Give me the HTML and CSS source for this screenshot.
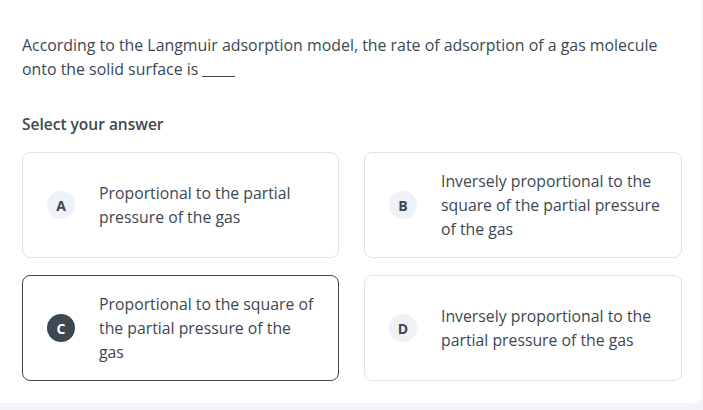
FILE: index.html
```html
<!DOCTYPE html>
<html>
<head>
<meta charset="utf-8">
<link rel="stylesheet" href="styles.css">
</head>
<body>
<div class="panel">
  <p class="question">According to the Langmuir adsorption model, the rate of adsorption of a gas molecule onto the solid surface is <span class="blank"></span></p>
  <h3 class="select">Select your answer</h3>
  <div class="options">
    <div class="option">
      <span class="badge">A</span>
      <span class="text">Proportional to the partial pressure of the gas</span>
    </div>
    <div class="option">
      <span class="badge">B</span>
      <span class="text">Inversely proportional to the square of the partial pressure of the gas</span>
    </div>
    <div class="option selected">
      <span class="badge">C</span>
      <span class="text">Proportional to the square of the partial pressure of the gas</span>
    </div>
    <div class="option">
      <span class="badge">D</span>
      <span class="text">Inversely proportional to the partial pressure of the gas</span>
    </div>
  </div>
</div>
</body>
</html>
```

FILE: styles.css
```css
html, body {
  margin: 0;
  padding: 0;
  background: #f2f4f7;
}
body {
  font-family: "Open Sans", "Noto Sans", sans-serif;
  color: #3c4852;
}
.panel {
  width: 701px;
  height: 403px;
  box-sizing: border-box;
  background: #ffffff;
  border-bottom-right-radius: 8px;
  padding: 33px 21px 0 22px;
}
.question {
  margin: 0;
  font-size: 15.9px;
  line-height: 24px;
  color: #3c4852;
  width: 660px;
}
.blank {
  display: inline-block;
  width: 33px;
  height: 1px;
  background: #3c4852;
  vertical-align: -2px;
}
.select {
  margin: 33px 0 18px;
  font-size: 15.5px;
  line-height: 20px;
  font-weight: 600;
  color: #3c4852;
}
.options {
  display: grid;
  grid-template-columns: 317px 318px;
  column-gap: 25px;
  row-gap: 17px;
}
.option {
  display: flex;
  align-items: center;
  gap: 24px;
  box-sizing: border-box;
  min-height: 106px;
  padding: 16px 20px 16px 24px;
  border: 1px solid #dde4eb;
  border-radius: 8px;
}
.option.selected {
  border-color: #3c4852;
}
.badge {
  flex: 0 0 28px;
  width: 28px;
  height: 28px;
  border-radius: 50%;
  background: #eef1f5;
  color: #3c4852;
  font-size: 14px;
  font-weight: 700;
  display: flex;
  align-items: center;
  justify-content: center;
}
.selected .badge {
  background: #3c4852;
  color: #ffffff;
}
.text {
  flex: 1;
  font-size: 15.8px;
  line-height: 24px;
}
```
